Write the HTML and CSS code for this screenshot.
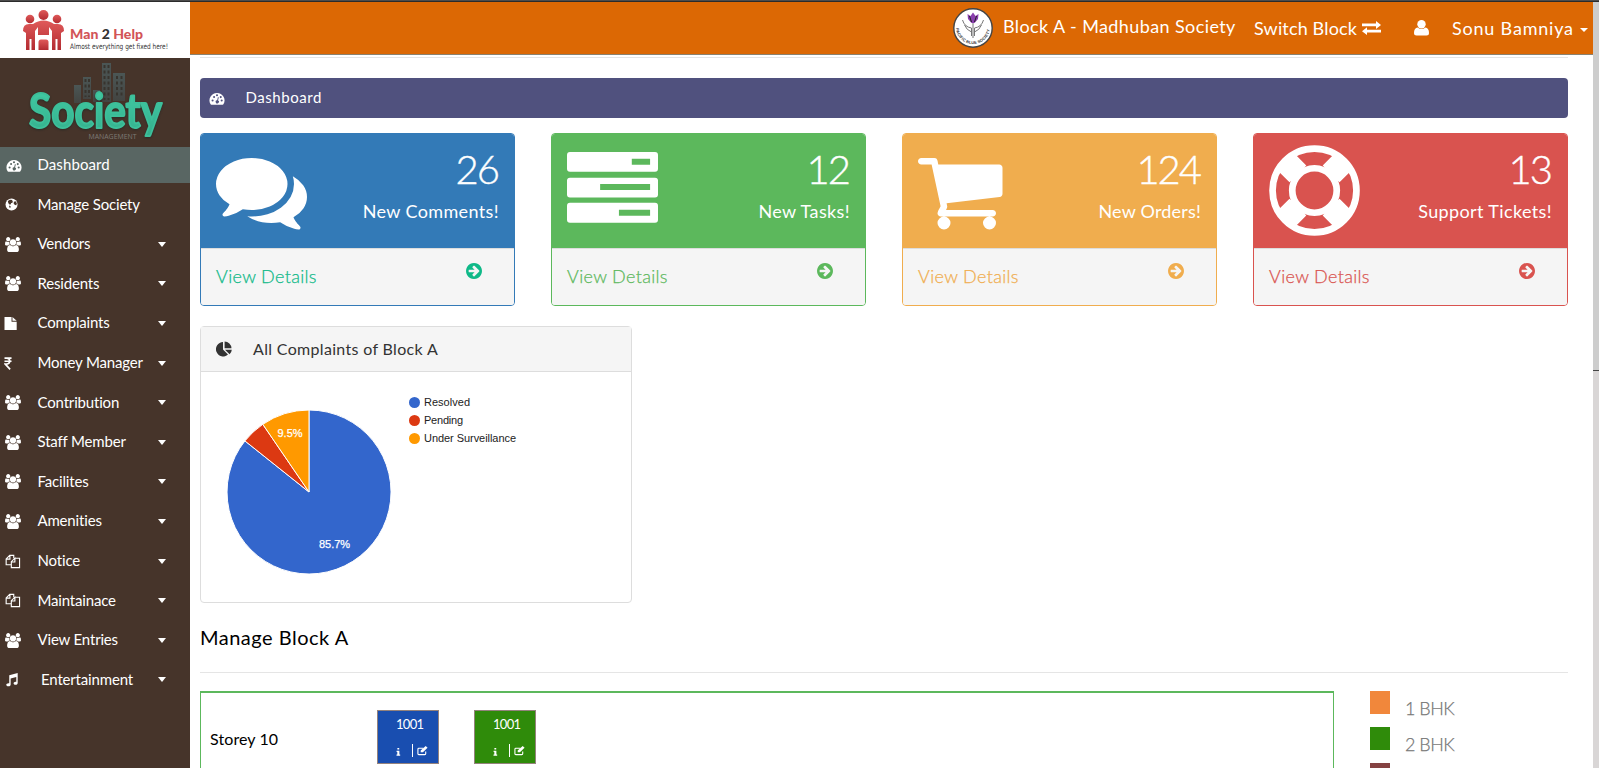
FILE: index.html
```html
<!DOCTYPE html>
<html lang="en">
<head>
<meta charset="utf-8">
<title>Dashboard - Madhuban Society</title>
<link rel="stylesheet" href="styles.css">
</head>
<body>
<svg class="defs" width="0" height="0" aria-hidden="true">
  <symbol id="i-dash" viewBox="0 0 16 16"><path fill="currentColor" fill-rule="evenodd" d="M8 2a8 8 0 0 0-6.800 12.200q.2.400.7.400h12.200q.5 0 .7-.4A8 8 0 0 0 8 2zM3.300 9a1.100 1.100 0 1 0 0 2.200 1.100 1.100 0 0 0 0-2.200zM4.900 5.200a1.100 1.100 0 1 0 0 2.200 1.100 1.100 0 0 0 0-2.200zM8 3.500a1.100 1.100 0 1 0 0 2.200 1.100 1.100 0 0 0 0-2.200zM12 5.400a1.100 1.100 0 1 0 0 2.200 1.100 1.100 0 0 0 0-2.200zM13 9a1.100 1.100 0 1 0 0 2.200A1.100 1.100 0 0 0 13 9zM9 6.500l-.8 3.300a1.700 1.700 0 1 0 .9.200l.8-3.200z"/></symbol>
  <symbol id="i-globe" viewBox="0 0 16 16"><circle cx="7.500" cy="8" r="6.400" fill="currentColor"/><path fill="#46342a" d="M3.600 4.200l2.200-1.400 2.800.4-.8 1.200 1.400.2-.8 1.600-1.600.4.2 1.200-1.800.2-1.200-1.600zM10 5l1.800-.6 1.400 2.200-.6 2.200-1.400-.4-1.400-1.200zM5 9l1.600.8-.4 1.800-1.200-.8z"/></symbol>
  <symbol id="i-users" viewBox="0 0 1920 1792"><path fill="currentColor" d="M593 896q-162 5-265 128h-134q-82 0-138-40.500t-56-118.500q0-353 124-353 6 0 43.500 21t97.500 42.500 119 21.500q67 0 133-23-5 37-5 66 0 139 81 256zm1071 637q0 120-73 189.500t-194 69.500h-874q-121 0-194-69.500t-73-189.500q0-53 3.500-103.500t14-109 26.500-108.500 43-97.500 62-81 85.500-53.500 111.500-20q10 0 43 21.500t73 48 107 48 135 21.500 135-21.500 107-48 73-48 43-21.500q61 0 111.500 20t85.500 53.500 62 81 43 97.500 26.500 108.500 14 109 3.500 103.500zm-1024-1277q0 106-75 181t-181 75-181-75-75-181 75-181 181-75 181 75 75 181zm704 384q0 159-112.500 271.500t-271.500 112.500-271.500-112.500-112.500-271.500 112.500-271.500 271.500-112.500 271.500 112.500 112.500 271.500zm576 225q0 78-56 118.500t-138 40.500h-134q-103-123-265-128 81-117 81-256 0-29-5-66 66 23 133 23 59 0 119-21.500t97.500-42.500 43.500-21q124 0 124 353zm-128-609q0 106-75 181t-181 75-181-75-75-181 75-181 181-75 181 75 75 181z"/></symbol>
  <symbol id="i-file" viewBox="0 0 16 16"><path fill="currentColor" d="M0 1h7.500v5H13v9H0zM8.500 1L13 5H8.500z"/></symbol>
  <symbol id="i-inr" viewBox="0 0 16 16"><path fill="none" stroke="currentColor" stroke-width="1.800" d="M0 2.300h7.500M0 5.600h7.500M0 2.300h2.300c4.300 0 4.300 6.300 0 6.300H.8l5.200 5.600"/></symbol>
  <symbol id="i-copy" viewBox="0 0 16 16"><path fill="none" stroke="currentColor" stroke-width="1.200" d="M6 11.500H.7V5.200L4.500 1.500h4.300v3M4.700 1.700v3.700H.9M10 4.500h5v10H6.200V8.200L10 4.500v4H6.400"/></symbol>
  <symbol id="i-music" viewBox="0 0 16 16"><path fill="currentColor" d="M4 3.500L13 1v10.600c0 1.300-1.100 2-2.400 2s-2-.7-2-1.600 1-1.700 2.300-1.700l.6.1V5.300L5.500 7v6.300c0 1.300-1.100 2-2.500 2s-2.200-.7-2.200-1.600S1.800 12 3.200 12l.8.1z"/></symbol>
  <symbol id="i-arrow" viewBox="128 128 1536 1536"><path fill="currentColor" d="M1413 896q0-27-18-45l-91-91-362-362q-18-18-45-18t-45 18l-91 91q-18 18-18 45t18 45l189 189h-502q-26 0-45 19t-19 45v128q0 26 19 45t45 19h502l-189 189q-19 19-19 45t19 45l91 91q18 18 45 18t45-18l362-362 91-91q18-18 18-45zm251 0q0 209-103 385.500t-279.500 279.500-385.500 103-385.500-103-279.500-279.500-103-385.500 103-385.500 279.500-279.500 385.500-103 385.500 103 279.500 279.500 103 385.500z"/></symbol>
  <symbol id="i-edit" viewBox="0 0 12 12"><path fill="none" stroke="currentColor" stroke-width="1.200" d="M9.500 7v2.500q0 1-1 1H2q-1 0-1-1v-5q0-1 1-1h5"/><path fill="currentColor" d="M4 6l5.500-5 2 2L6.500 8H4z"/></symbol>
  <symbol id="i-info" viewBox="0 0 6 10"><path fill="currentColor" d="M1.600 0h2.300v2H1.600zM.6 3.500h3.500v4.700h1V9.800H.5V8.200h1V5h-.9z"/></symbol>
</svg>

<div class="topline"></div>
<div class="app">
  <aside class="sidebar">
    <div class="brand">
      <svg width="190" height="56" viewBox="0 2 190 56">
        <defs><linearGradient id="red" x1="0" y1="0" x2="0" y2="1"><stop offset="0" stop-color="#e05a5a"/><stop offset="1" stop-color="#b32b31"/></linearGradient></defs>
        <g fill="url(#red)"><circle cx="43.500" cy="15" r="5"/><circle cx="30" cy="19" r="4.300"/><circle cx="57" cy="19" r="4.300"/>
        <path d="M23 31q0-7 6-7h4q5-3.500 10.500-3.500T54 24h4q6 0 6 7l-3 2v17h-3.500V39h-2v11H52V31l-3-4v8H38v-8l-3 4v19h-3.500V39h-2v11H26V33z"/>
        <path d="M38.500 42q0-2.500 2.500-2.500h5q2.500 0 2.500 2.500v8h-10z"/></g>
        <text class="brand-name" x="70" y="39" textLength="73">Man <tspan fill="#333">2</tspan> Help</text>
        <text class="brand-tag" x="70" y="48.500" textLength="98" lengthAdjust="spacingAndGlyphs">Almost everything get fixed here!</text>
      </svg>
    </div>
    <div class="society">
      <svg width="190" height="89" viewBox="0 58 190 89">
        <defs><linearGradient id="teal" x1="0" y1="0" x2="0" y2="1"><stop offset="0" stop-color="#43cfa7"/><stop offset="1" stop-color="#34ae8c"/></linearGradient>
        <linearGradient id="tower" x1="0" y1="0" x2="0" y2="1"><stop offset="0" stop-color="#4b5655"/><stop offset="1" stop-color="#434542"/></linearGradient></defs>
        <g fill="url(#tower)"><path d="M74 85h7v18h-7z"/><path d="M83 77h8v22h-8z"/><path d="M93 90h7v12h-7z"/><path d="M102 63h9v39h-9z"/><path d="M113 73h12v28h-12z"/></g>
        <path stroke="#38342e" stroke-width="2" stroke-dasharray="3 2.500" d="M85.500 79v18M89 79v18M104.500 65v35M108.500 65v35M117 76v22M121.500 76v22"/>
        <text class="soc" x="29" y="127.500" textLength="133" lengthAdjust="spacingAndGlyphs">Society</text>
        <text class="soc-sub" x="88.500" y="138.500" textLength="48" lengthAdjust="spacingAndGlyphs">MANAGEMENT</text>
      </svg>
    </div>
    <nav class="menu">
      <a class="item active"><svg class="ic shift"><use href="#i-dash"/></svg><span>Dashboard</span></a>
      <a class="item"><svg class="ic globe"><use href="#i-globe"/></svg><span>Manage Society</span></a>
      <a class="item"><svg class="ic"><use href="#i-users"/></svg><span>Vendors</span><i class="caret"></i></a>
      <a class="item"><svg class="ic"><use href="#i-users"/></svg><span>Residents</span><i class="caret"></i></a>
      <a class="item"><svg class="ic left"><use href="#i-file"/></svg><span>Complaints</span><i class="caret"></i></a>
      <a class="item"><svg class="ic left"><use href="#i-inr"/></svg><span>Money Manager</span><i class="caret"></i></a>
      <a class="item"><svg class="ic"><use href="#i-users"/></svg><span>Contribution</span><i class="caret"></i></a>
      <a class="item"><svg class="ic"><use href="#i-users"/></svg><span>Staff Member</span><i class="caret"></i></a>
      <a class="item"><svg class="ic"><use href="#i-users"/></svg><span>Facilites</span><i class="caret"></i></a>
      <a class="item"><svg class="ic"><use href="#i-users"/></svg><span>Amenities</span><i class="caret"></i></a>
      <a class="item"><svg class="ic"><use href="#i-copy"/></svg><span>Notice</span><i class="caret"></i></a>
      <a class="item"><svg class="ic"><use href="#i-copy"/></svg><span>Maintainace</span><i class="caret"></i></a>
      <a class="item"><svg class="ic"><use href="#i-users"/></svg><span>View Entries</span><i class="caret"></i></a>
      <a class="item"><svg class="ic"><use href="#i-music"/></svg><span class="indent">Entertainment</span><i class="caret"></i></a>
    </nav>
  </aside>

  <div class="page">
    <header class="header">
      <svg class="crest" width="40" height="40" viewBox="0 0 40 40">
        <circle cx="20" cy="20" r="19.200" fill="#fff" stroke="#444" stroke-width="1.400"/>
        <path fill="none" stroke="#777" stroke-width="1" d="M20 30V15M18.500 28V20q-7-1-9-8M21.500 28V20q7-1 9-8M18.500 24q-5-2-7-7M21.500 24q5-2 7-7"/>
        <path fill="#8a3fae" d="M14.500 6l3 2 2.500-3.500L22.500 8l3-2-.5 5-3.500 4h-3L15 11z"/><path stroke="#222" fill="none" d="M16.500 8l2 6M23.500 8l-2 6"/>
        <path id="ring" fill="none" d="M4.500 19a15.500 15.500 0 0 0 31 0"/>
        <text class="crest-text" dy="1.500"><textPath href="#ring" startOffset="1" textLength="45">PACIFIC BLUE SOCIETY</textPath></text>
      </svg>
      <span class="block">Block A - Madhuban Society</span>
      <span class="switch">Switch Block</span>
      <svg class="swap" width="19" height="14" viewBox="0 0 19 14"><path fill="#fff" d="M0 2.600h14V0l5 4-5 4V5.200H0zM19 8.800H5V6.200l-5 4 5 3.800v-2.600h14z"/></svg>
      <svg class="person" width="15" height="16" viewBox="0 0 15 16"><circle cx="7.500" cy="4.200" r="4.200" fill="#fff"/><path fill="#fff" d="M3.600 7.500q4 3 7.800 0Q15 8 15 13q0 2.500-2.500 2.500h-10Q0 15.500 0 13q0-5 3.600-5.500z"/></svg>
      <span class="user">Sonu Bamniya</span><i class="caret small"></i>
    </header>

    <main class="main">
      <hr class="rule">
      <div class="crumb"><svg class="ic"><use href="#i-dash"/></svg><span>Dashboard</span></div>

      <section class="cards">
        <article class="card blue">
          <div class="top">
            <svg class="big" width="91" height="91" viewBox="0 0 1792 1792"><path fill="#fff" d="M1408 768q0 139-94 257t-256.500 186.500-353.500 68.500q-86 0-176-16-124 88-278 128-36 9-86 16h-3q-11 0-20.500-8t-11.500-21q-1-3-1-6.500t.5-6.500 2-6l2.500-5 3.500-5.500 4-5 4.500-5 4-4.500q5-6 23-25t26-29.500 22.500-29 25-38.500 20.500-44q-124-72-195-177t-71-224q0-139 94-257t256.500-186.500 353.500-68.500 353.500 68.500 256.500 186.500 94 257zm384 256q0 120-71 224.500t-195 176.500q10 24 20.500 44t25 38.500 22.500 29 26 29.500 23 25q1 1 4 4.500t4.500 5 4 5 3.500 5.500l2.500 5 2 6 .5 6.500-1 6.500q-3 14-13 22t-22 7q-50-7-86-16-154-40-278-128-90 16-176 16-271 0-472-132 58 4 88 4 161 0 309-45t264-129q125-92 192-212t67-254q0-77-23-152 129 71 204 178t75 230z"/></svg>
            <div class="stat"><b>26</b><span>New Comments!</span></div>
          </div>
          <div class="foot"><span>View Details</span><svg class="go"><use href="#i-arrow"/></svg></div>
        </article>
        <article class="card green">
          <div class="top">
            <svg class="big" width="91" height="91" viewBox="0 0 92 92"><path fill="#fff" fill-rule="evenodd" d="M3 7h86q3 0 3 3v14q0 3-3 3H3q-3 0-3-3V10q0-3 3-3zm62.500 7v6H84v-6zM3 33h86q3 0 3 3v14q0 3-3 3H3q-3 0-3-3V36q0-3 3-3zm30.500 6.500v6H84v-6zM3 58.500h86q3 0 3 3v14q0 3-3 3H3q-3 0-3-3v-14q0-3 3-3zm49.500 7v6H84v-6z"/></svg>
            <div class="stat"><b>12</b><span>New Tasks!</span></div>
          </div>
          <div class="foot"><span>View Details</span><svg class="go"><use href="#i-arrow"/></svg></div>
        </article>
        <article class="card amber">
          <div class="top">
            <svg class="big" width="91" height="91" viewBox="64 0 1792 1792"><path fill="#fff" d="M704 1536q0 52-38 90t-90 38-90-38-38-90 38-90 90-38 90 38 38 90zm896 0q0 52-38 90t-90 38-90-38-38-90 38-90 90-38 90 38 38 90zm128-1088v512q0 24-16.500 42.500t-40.500 21.500l-1044 122q13 60 13 70 0 16-24 64h920q26 0 45 19t19 45-19 45-45 19h-1024q-26 0-45-19t-19-45q0-11 8-31.500t16-36 21.500-40 15.500-29.500l-177-823h-204q-26 0-45-19t-19-45 19-45 45-19h256q16 0 28.500 6.500t19.500 15.500 13 24.500 8 26 5.500 29.500 4.500 26h1201q26 0 45 19t19 45z"/></svg>
            <div class="stat"><b>124</b><span class="tight">New Orders!</span></div>
          </div>
          <div class="foot"><span>View Details</span><svg class="go"><use href="#i-arrow"/></svg></div>
        </article>
        <article class="card red">
          <div class="top">
            <svg class="big" width="91" height="91" viewBox="-46 -46 92 92"><g fill="none" stroke="#fff"><circle r="42.400" stroke-width="6.800"/><circle r="22.500" stroke-width="6.800"/><path stroke-width="24" d="M-28.300-28.300l11.500 11.500M28.300-28.300L16.800-16.800M-28.300 28.300l11.500-11.500M28.300 28.300L16.800 16.800"/></g></svg>
            <div class="stat"><b>13</b><span>Support Tickets!</span></div>
          </div>
          <div class="foot"><span>View Details</span><svg class="go"><use href="#i-arrow"/></svg></div>
        </article>
      </section>

      <section class="panel">
        <div class="panel-head">
          <svg width="16" height="16" viewBox="0 0 16 16"><path fill="#333" d="M7 1v7.500l5 5A7.200 7.200 0 1 1 7 1zM8.600.5a7 7 0 0 1 6.900 6.700H8.600zM9 8.700h6.800a7 7 0 0 1-2.200 4.600z"/></svg>
          <span>All Complaints of Block A</span>
        </div>
        <svg class="pie" width="430" height="230" viewBox="201 372 430 230">
          <g stroke="#fff" stroke-width="1">
            <path fill="#3366cc" d="M309 492V410A82 82 0 1 1 244.900 440.900z"/>
            <path fill="#dc3912" d="M309 492L244.900 440.900A82 82 0 0 1 262.800 424.300z"/>
            <path fill="#ff9900" d="M309 492L262.800 424.300A82 82 0 0 1 309 410z"/>
          </g>
          <g class="pct"><text x="277.500" y="437" textLength="25">9.5%</text><text x="319" y="548" textLength="31">85.7%</text></g>
          <circle cx="414.500" cy="402.500" r="5.500" fill="#3366cc"/><circle cx="414.500" cy="420.500" r="5.500" fill="#dc3912"/><circle cx="414.500" cy="438.500" r="5.500" fill="#ff9900"/>
          <g class="key"><text x="424" y="406" textLength="46">Resolved</text><text x="424" y="424" textLength="39">Pending</text><text x="424" y="442" textLength="92">Under Surveillance</text></g>
        </svg>
      </section>

      <h2 class="title">Manage Block A</h2>
      <hr class="rule">
      <section class="manage">
        <div class="storey">
          <span class="name">Storey 10</span>
          <div class="flat f-blue"><span>1001</span><div><svg class="inf"><use href="#i-info"/></svg><i class="bar"></i><svg class="edit"><use href="#i-edit"/></svg></div></div>
          <div class="flat f-green"><span>1001</span><div><svg class="inf"><use href="#i-info"/></svg><i class="bar"></i><svg class="edit"><use href="#i-edit"/></svg></div></div>
        </div>
        <div class="legend">
          <div><i class="sq o"></i><span>1 BHK</span></div>
          <div><i class="sq g"></i><span>2 BHK</span></div>
          <div class="last"><i class="sq m"></i></div>
        </div>
      </section>
    </main>
  </div>
  <div class="scroll"><div class="thumb"></div></div>
</div>
</body>
</html>
```

FILE: styles.css
```css
* { box-sizing: border-box; }
body { margin: 0; height: 768px; overflow: hidden; background: #fff; color: #000; font-family: Lato, "Open Sans", sans-serif; }
.defs { position: absolute; }
svg { display: block; flex: none; }
.topline { height: 2px; background: #4c4c4c; border-bottom: 1px solid #2b2b2b; }
.app { display: flex; height: 766px; }

.sidebar { width: 190px; background: #46342a; flex: none; }
.brand { height: 56px; background: #fff; }
.society { height: 89px; }
.brand-name { font: 900 14px Lato, sans-serif; fill: #d25458; }
.brand-tag { font: 7.500px "DejaVu Sans", sans-serif; fill: #333; }
.soc { font: 700 48px Lato, sans-serif; fill: url(#teal); stroke: #3dbf9a; stroke-width: 2px; stroke-linejoin: round; filter: drop-shadow(0 1px 1px #2b2a25); }
.soc-sub { font: 7.500px "Open Sans", sans-serif; fill: #7d7a75; }
.menu { display: flex; flex-direction: column; gap: 3.620px; }
.item { display: flex; align-items: center; height: 36px; padding: 0 24.500px 0 5px; color: #fff; font-size: 15px; letter-spacing: -.17px; }
.item.active { background: #596663; letter-spacing: .1px; }
.item span { margin-left: 16.500px; padding-bottom: 2px; flex: 1; white-space: nowrap; }
.item span.indent { margin-left: 20px; }
.ic { width: 16px; height: 15px; }
.shift { margin-left: 1px; margin-right: -1px; }
.left, .globe { margin-left: -1px; margin-right: 1px; }
.caret { width: 0; height: 0; border: 4.500px solid transparent; border-top: 5px solid #fff; border-bottom: 0; }
.caret.small { border-width: 4px 4px 0; margin-top: 4px; }

.page { width: 1403px; flex: none; }
.header { display: flex; align-items: center; height: 53px; background: #dc6804; border-bottom: 1px solid #8a8270; color: #fff; font-size: 18px; white-space: nowrap; padding-left: 763px; }
.crest-text { font: 700 4px "Liberation Sans", sans-serif; fill: #333; }
.block { margin-left: 10px; width: 251px; padding-bottom: 4px; letter-spacing: .4px; }
.switch { width: 108px; letter-spacing: .15px; }
.swap { margin-right: 33px; }
.person { margin-right: 23px; }
.user { width: 128px; letter-spacing: .8px; }

.main { padding: 2px 25px 0 10px; }
.rule { height: 1px; border: 0; margin: 0; background: #e5e5e5; }
.crumb { display: flex; align-items: center; height: 40px; margin-top: 20px; padding-left: 8.500px; background: #50517e; border-radius: 4px; color: #fff; font-size: 15px; }
.crumb span { margin-left: 21px; padding-bottom: 2px; letter-spacing: .55px; }
.cards { display: grid; grid-template-columns: repeat(4, 315px); gap: 36px; margin-top: 15px; }
.card { --c: #337ab7; --t: #0fb988; height: 173px; border: 1px solid var(--c); border-radius: 4px; overflow: hidden; }
.green { --c: #5cb85c; --t: #5cb85c; }
.amber { --c: #f0ad4e; --t: #f0ad4e; }
.red { --c: #d9534f; --t: #d9534f; }
.top { display: flex; justify-content: space-between; height: 114px; padding: 11px 15px 11px 14.500px; background: var(--c); color: #fff; }
.stat { display: flex; flex-direction: column; align-items: flex-end; }
.stat b { font-weight: 300; font-size: 40px; line-height: 50px; letter-spacing: -2px; margin: -1px 1px 1px 0; -webkit-text-stroke: .4px currentColor; }
.stat span { font-size: 18px; line-height: 32px; white-space: nowrap; letter-spacing: .38px; }
.stat span.tight { letter-spacing: .2px; }
.foot { display: flex; justify-content: space-between; height: 57px; padding: 14px 32px 0 15px; background: #f5f5f5; border-top: 1px solid #ddd; color: var(--t); font-size: 18px; font-weight: 300; line-height: 26px; letter-spacing: .33px; -webkit-text-stroke: .25px currentColor; }
.go { width: 16px; height: 16px; }

.panel { width: 432px; height: 277px; margin-top: 20px; border: 1px solid #ddd; border-radius: 4px; }
.panel-head { display: flex; align-items: center; height: 45px; padding-left: 15px; background: #f5f5f5; border-bottom: 1px solid #ddd; color: #333; font-size: 16px; }
.panel-head span { margin-left: 21px; padding-bottom: 1px; letter-spacing: .33px; }
.pct { font: 11px "Liberation Sans", sans-serif; fill: #fff; stroke: #fff; stroke-width: .25px; }
.key { font: 11px "Liberation Sans", sans-serif; fill: #222; }

.title { margin: 19px 0 0; height: 50px; font-size: 20px; font-weight: 400; line-height: 30px; letter-spacing: .5px; }
.manage { display: flex; justify-content: space-between; height: 77px; margin-top: 18px; }
.storey { display: flex; width: 1134px; border: 1px solid #5cb85c; border-top-width: 2px; border-bottom: 0; padding: 17px 0 0 9px; }
.name { width: 167px; padding-top: 19px; font-size: 16px; letter-spacing: .1px; }
.flat { width: 62px; height: 54px; margin-right: 35px; padding: 3px 0 0 18px; border: 1px solid #94827c; color: #fff; font-size: 13px; line-height: 20px; letter-spacing: -.7px; }
.flat div { display: flex; align-items: center; height: 13px; margin-top: 10px; }
.flat > span { display: block; height: 20px; }
.f-blue { background: #194eb0; }
.f-green { background: #2f8b0a; }
.inf { width: 5px; height: 8px; margin-top: 2px; }
.bar { width: 1px; height: 13px; background: #fff; margin: 0 4px 0 11px; }
.edit { width: 11px; height: 11px; }
.legend { width: 198px; display: flex; flex-direction: column; gap: 13px; }
.legend div { display: flex; flex: none; height: 23px; }
.legend .last { height: 5px; }
.sq { width: 20px; height: 100%; }
.o { background: #f1873b; }
.g { background: #2f8b0a; }
.m { background: #854242; }
.legend span { margin: 6px 0 0 15px; height: 17px; color: #777; font-size: 18px; font-weight: 300; line-height: 22px; letter-spacing: -.5px; -webkit-text-stroke: .25px currentColor; }

.scroll { width: 6px; background: #d9d6d6; }
.thumb { height: 369px; background: #cdcdcd; border-bottom: 1px solid #444; }
```
